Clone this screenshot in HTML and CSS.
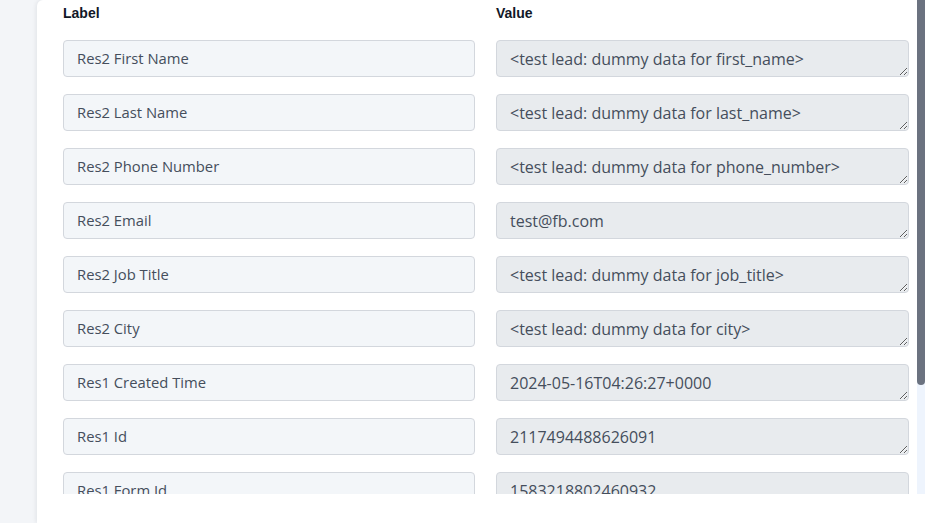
FILE: index.html
```html
<!DOCTYPE html>
<html lang="en">
<head>
<meta charset="utf-8">
<title>Field mapping</title>
<link rel="stylesheet" href="styles.css">
</head>
<body>
<div class="page">
  <div class="card">
    <div class="viewport">
      <div class="scroller">
        <div class="grid">
          <div class="head">Label</div>
          <div class="head">Value</div>

          <input class="label-input" type="text" value="Res2 First Name" readonly>
          <textarea class="value-input" rows="1" readonly>&lt;test lead: dummy data for first_name&gt;</textarea>

          <input class="label-input" type="text" value="Res2 Last Name" readonly>
          <textarea class="value-input" rows="1" readonly>&lt;test lead: dummy data for last_name&gt;</textarea>

          <input class="label-input" type="text" value="Res2 Phone Number" readonly>
          <textarea class="value-input" rows="1" readonly>&lt;test lead: dummy data for phone_number&gt;</textarea>

          <input class="label-input" type="text" value="Res2 Email" readonly>
          <textarea class="value-input" rows="1" readonly>test@fb.com</textarea>

          <input class="label-input" type="text" value="Res2 Job Title" readonly>
          <textarea class="value-input" rows="1" readonly>&lt;test lead: dummy data for job_title&gt;</textarea>

          <input class="label-input" type="text" value="Res2 City" readonly>
          <textarea class="value-input" rows="1" readonly>&lt;test lead: dummy data for city&gt;</textarea>

          <input class="label-input" type="text" value="Res1 Created Time" readonly>
          <textarea class="value-input" rows="1" readonly>2024-05-16T04:26:27+0000</textarea>

          <input class="label-input" type="text" value="Res1 Id" readonly>
          <textarea class="value-input" rows="1" readonly>2117494488626091</textarea>

          <input class="label-input" type="text" value="Res1 Form Id" readonly>
          <textarea class="value-input" rows="1" readonly>1583218802460932</textarea>

          <input class="label-input" type="text" value="Res1 Ad Id" readonly>
          <textarea class="value-input" rows="1" readonly>&lt;test lead: dummy data for ad_id&gt;</textarea>

          <input class="label-input" type="text" value="Res1 Ad Name" readonly>
          <textarea class="value-input" rows="1" readonly>&lt;test lead: dummy data for ad_name&gt;</textarea>
        </div>
      </div>
      <div class="scrollbar">
        <div class="thumb"></div>
      </div>
    </div>
  </div>
</div>
</body>
</html>
```

FILE: styles.css
```css
html, body {
  margin: 0;
  padding: 0;
  height: 100%;
  overflow: hidden;
}

body {
  background: #f3f5f8;
  font-family: "Open Sans", "Liberation Sans", sans-serif;
}

.page {
  height: 100%;
  padding-left: 37px;
  box-sizing: border-box;
}

.card {
  height: 100%;
  background: #ffffff;
  border-top-left-radius: 6px;
  box-shadow: -1px 0 4px rgba(17, 24, 39, 0.08);
  padding-right: 8px;
}

.viewport {
  display: flex;
  height: 494px;
}

.scroller {
  flex: 1;
  overflow: hidden;
}

.scrollbar {
  width: 8px;
  flex: none;
  background: #eef4fd;
}

.thumb {
  height: 385px;
  background: #6b7280;
  border-radius: 0 0 4px 4px;
}

.grid {
  display: grid;
  grid-template-columns: 412px 413px;
  column-gap: 21px;
  row-gap: 17px;
  padding: 4px 8px 0 26px;
}

.head {
  font-family: "Liberation Sans", Arial, sans-serif;
  font-weight: 700;
  font-size: 14px;
  color: #111827;
  height: 19px;
  padding-top: 1px;
  box-sizing: border-box;
}

.label-input,
.value-input {
  box-sizing: border-box;
  height: 37px;
  margin: 0;
  border: 1px solid #d3d7dd;
  border-radius: 4px;
  padding: 0 13px;
  font-family: "Open Sans", "Liberation Sans", sans-serif;
  color: #454e5c;
  outline: none;
}

.label-input {
  background: #f3f6f9;
  font-size: 14.8px;
  padding-bottom: 2px;
}

.value-input {
  background: #e8ebee;
  font-size: 16px;
  padding-top: 8px;
  line-height: 21px;
  resize: vertical;
  overflow: hidden;
  display: block;
  width: 100%;
}
```
